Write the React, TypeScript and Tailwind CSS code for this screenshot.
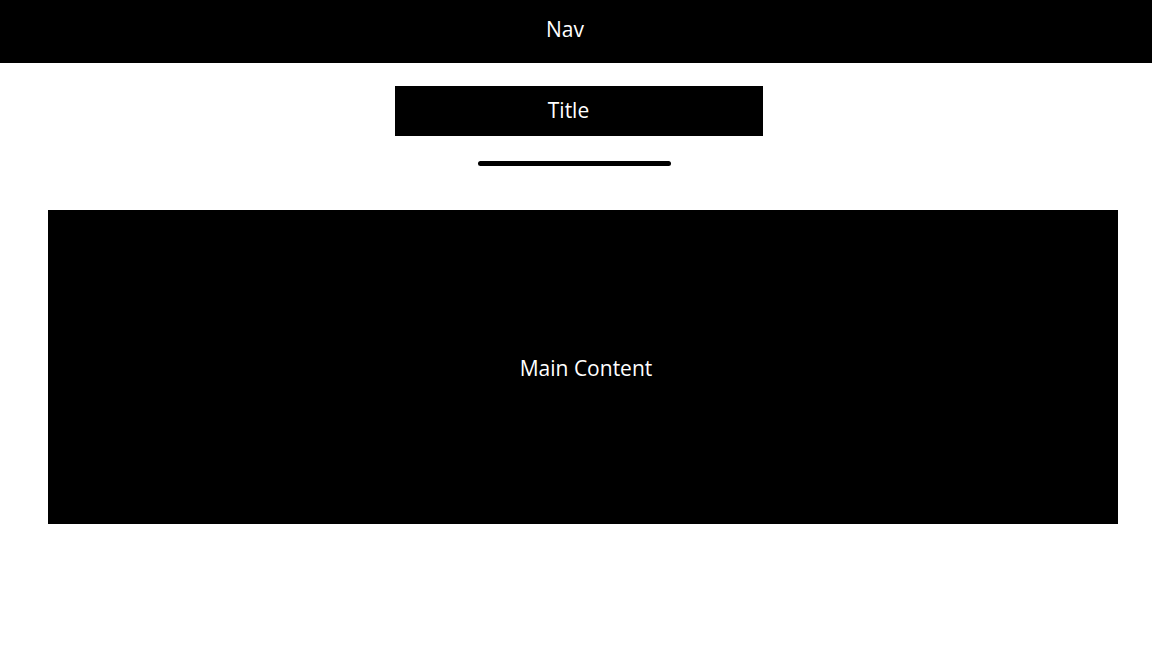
import React from "react";

const font = { fontFamily: '"Open Sans", "Noto Sans", sans-serif' };

const App: React.FC = () => {
  return (
    <div className="min-h-[648px] w-full bg-white" style={font}>
      <nav className="flex h-[63px] w-full items-center justify-center bg-black pb-[3px] pr-[22px] text-[21px] text-white">
        <span>Nav</span>
      </nav>

      <div className="ml-[395px] mt-[23px] flex h-[50px] w-[368px] items-center justify-center bg-black pb-[1px] pr-[21px] text-[21px] text-white">
        <h1>Title</h1>
      </div>

      <div className="ml-[478px] mt-[25px] h-[5px] w-[193px] rounded-full bg-black" />

      <main className="ml-[48px] mt-[44px] flex h-[314px] w-[1070px] items-center justify-center bg-black pl-[6px] pt-[3px] text-[21px] text-white">
        <p>Main Content</p>
      </main>
    </div>
  );
};

export default App;
